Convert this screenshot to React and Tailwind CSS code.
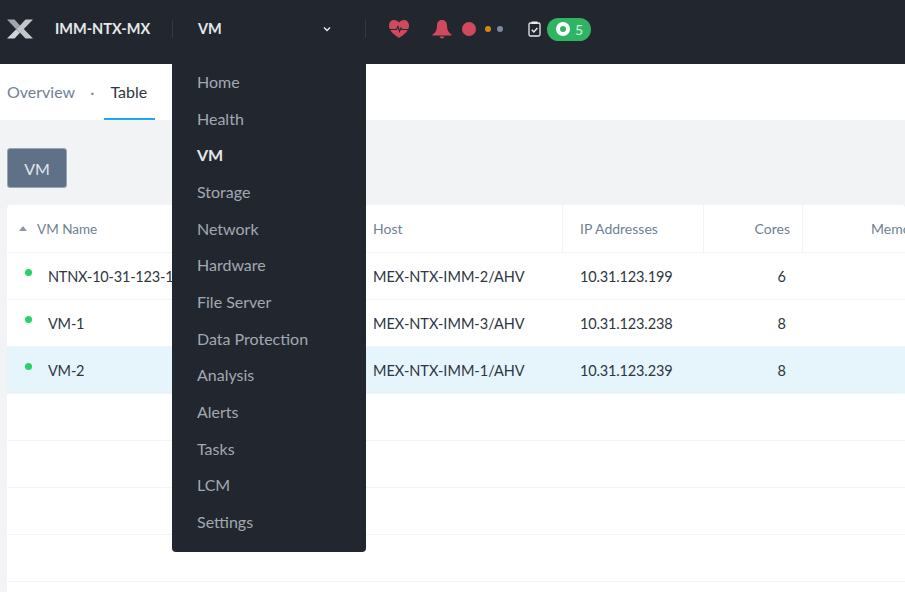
const menuItems = ['Home', 'Health', 'VM', 'Storage', 'Network', 'Hardware', 'File Server', 'Data Protection', 'Analysis', 'Alerts', 'Tasks', 'LCM', 'Settings'];

const rows = [
  { name: 'NTNX-10-31-123-199', host: 'MEX-NTX-IMM-2/AHV', ip: '10.31.123.199', cores: 6 },
  { name: 'VM-1', host: 'MEX-NTX-IMM-3/AHV', ip: '10.31.123.238', cores: 8 },
  { name: 'VM-2', host: 'MEX-NTX-IMM-1/AHV', ip: '10.31.123.239', cores: 8, selected: true },
];

function Logo() {
  return (
    <svg width="26" height="20" viewBox="0 0 26 20">
      <path d="M0 .500h7.500l5.500 6-3.800 3.700z" fill="#a2a5ac" />
      <path d="M0 19.500 9.200 10.200 13 13.800 7.500 19.500z" fill="#d2d4d8" />
      <path d="M9.200 10.200 13 6.500 18.500 .500H26L16.800 10 26 19.500H18.500L13 13.800z" fill="#c4c6cb" />
    </svg>
  );
}

function Heart() {
  return (
    <svg width="22" height="20" viewBox="0 0 22 20">
      <path d="M11 19C7 16 1 12.500 1 6.500 1 3 3.500 1 6 1c2 0 4 1 5 2.500C12 2 14 1 16 1c2.500 0 5 2 5 5.500C21 12.500 15 16 11 19z" fill="#cf4a5c" />
      <path d="M1 10.500h7.500l1.500-3 1.500 5 1.500-3.500 1 1.500h6.500" fill="none" stroke="#22272f" strokeWidth="1.100" />
    </svg>
  );
}

function Bell() {
  return (
    <svg width="20" height="20" viewBox="0 0 20 20">
      <path d="M10 1c3.500 0 5 2.500 5 6 0 4 1.500 6.500 4.500 8.500v1H.5v-1C3.500 13.500 5 11 5 7c0-3.500 1.500-6 5-6z" fill="#cf4a5c" />
      <path d="M7.500 17.500h5c-.5 1.300-1.300 2-2.500 2s-2-.7-2.500-2z" fill="#cf4a5c" />
    </svg>
  );
}

function TaskIcon() {
  return (
    <svg width="13" height="16" viewBox="0 0 13 16">
      <rect x="1" y="2" width="11" height="13" rx="1.500" fill="none" stroke="#e8e9eb" strokeWidth="1.300" />
      <rect x="3.500" y="0.500" width="6" height="2.500" fill="#e8e9eb" />
      <path d="M3.800 8.800 5.800 11l3.600-4" fill="none" stroke="#e8e9eb" strokeWidth="1.500" />
    </svg>
  );
}

function Header() {
  return (
    <header className="h-[64px] shrink-0 bg-[#22272f] flex items-center pb-[6px]">
      <div className="ml-[7px] w-[48px] flex"><Logo /></div>
      <span className="w-[117px] text-[14.500px] font-bold text-[#e6e7ea]">IMM-NTX-MX</span>
      <div className="w-[194px] h-[18px] border-x border-[#333a44] flex items-center justify-between pl-[25px] pr-[34px]">
        <span className="text-[14.500px] font-bold text-[#e6e7ea]">VM</span>
        <svg width="8" height="6" viewBox="0 0 8 6"><path d="M1 1.500 4 4.500 7 1.500" fill="none" stroke="#e6e7ea" strokeWidth="1.500" /></svg>
      </div>
      <div className="ml-[22px] flex"><Heart /></div>
      <div className="ml-[22px] flex"><Bell /></div>
      <span className="ml-[10px] w-[14px] h-[14px] rounded-full bg-[#cf4a5c]" />
      <span className="ml-[9px] w-[6px] h-[6px] rounded-full bg-[#d9860f]" />
      <span className="ml-[6px] w-[6px] h-[6px] rounded-full bg-[#7d8a9c]" />
      <div className="ml-[25px] flex"><TaskIcon /></div>
      <div className="ml-[6px] w-[44px] h-[23px] rounded-full bg-[#2fb464] flex items-center pl-[9px] gap-[5px]">
        <span className="w-[14px] h-[14px] rounded-full border-[4px] border-white" />
        <span className="text-[14px] text-[#d5f0df]">5</span>
      </div>
    </header>
  );
}

function Tabs() {
  return (
    <div className="h-[56px] shrink-0 bg-white flex pl-[7px] text-[16px]">
      <span className="pt-[16px] text-[#6f7f94]">Overview</span>
      <span className="pt-[16px] ml-[15px] text-[#6f7f94]">·</span>
      <div className="ml-[10px] w-[51px] border-b-2 border-[#22a5f7] text-center pt-[16px] pr-[2px] text-[#2e3642]">Table</div>
    </div>
  );
}

function HeaderCell({ className, children }) {
  return <div className={`h-full shrink-0 flex items-center border-r border-[#f2f3f5] ${className}`}>{children}</div>;
}

function VmTable() {
  return (
    <div className="mt-[17px] ml-[7px] bg-white rounded-t-[4px] flex-1 min-h-0 overflow-hidden">
      <div className="h-[47px] flex items-center text-[14px] text-[#6f7f94]">
        <HeaderCell className="w-[350px] pl-[12px]">
          <span className="w-0 h-0 border-x-[4px] border-x-transparent border-b-[5px] border-b-[#8b98aa]" />
          <span className="ml-[10px] pt-[2px] text-[13.500px]">VM Name</span>
        </HeaderCell>
        <HeaderCell className="w-[206px] pl-[16px]">Host</HeaderCell>
        <HeaderCell className="w-[141px] pl-[17px]">IP Addresses</HeaderCell>
        <HeaderCell className="w-[99px] justify-end pr-[12px]">Cores</HeaderCell>
        <div className="w-[200px] shrink-0 pl-[68px]">Memory</div>
      </div>
      {rows.map((row) => (
        <div key={row.name} className={`h-[47px] flex items-center border-t border-[#f2f3f5] text-[14.500px] text-[#2e3642] ${row.selected ? 'bg-[#e6f4fc]' : ''}`}>
          <div className="w-[350px] shrink-0 flex items-center pl-[18px]">
            <span className="w-[7px] h-[7px] -mt-[7px] rounded-full bg-[#26d367]" />
            <span className="ml-[16px] pt-[2px] tracking-[-0.2px] whitespace-nowrap">{row.name}</span>
          </div>
          <div className="w-[206px] shrink-0 pl-[16px] pt-[2px]">{row.host}</div>
          <div className="w-[141px] shrink-0 pl-[17px] pt-[2px] tracking-[-0.15px]">{row.ip}</div>
          <div className="w-[99px] shrink-0 text-right pr-[17px] pt-[2px]">{row.cores}</div>
        </div>
      ))}
      {[0, 1, 2, 3, 4].map((i) => (
        <div key={i} className="h-[47px] border-t border-[#f2f3f5]" />
      ))}
    </div>
  );
}

function Menu() {
  return (
    <nav className="absolute left-[172px] top-[64px] w-[194px] h-[488px] bg-[#22272f] rounded-b-[4px] text-[16px]">
      {menuItems.map((item) => (
        <div key={item} className={`h-[36.700px] flex items-center pl-[25px] pb-[1px] ${item === 'VM' ? 'font-bold text-[#e6e7ea]' : 'text-[#a3a8b2]'}`}>{item}</div>
      ))}
    </nav>
  );
}

export default function App() {
  return (
    <div className="relative w-[905px] h-[592px] overflow-hidden flex flex-col bg-[#f2f3f5] font-['Lato',sans-serif]">
      <Header />
      <Tabs />
      <main className="flex-1 min-h-0 flex flex-col">
        <button className="mt-[28px] ml-[7px] w-[60px] h-[40px] shrink-0 rounded-[3px] border border-[#9aa6b5] bg-[#5f7186] pt-[2px] text-[16px] text-[#e1e5ea]">VM</button>
        <VmTable />
      </main>
      <Menu />
    </div>
  );
}
